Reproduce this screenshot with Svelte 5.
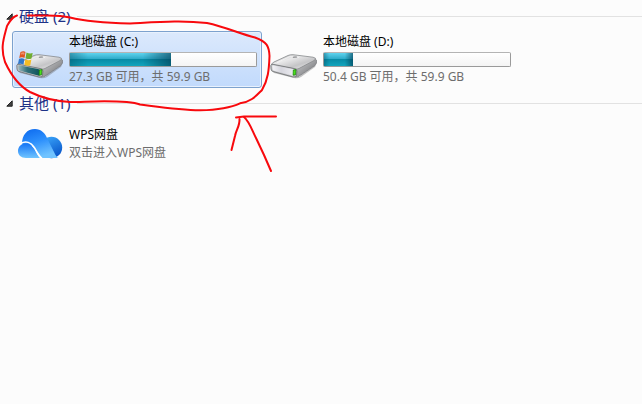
<script>
  let open = $state({ disks: true, other: true });
  let selected = $state('C');

  const drives = [
    { id: 'C', name: '本地磁盘 (C:)', free: 27.3, total: 59.9, system: true },
    { id: 'D', name: '本地磁盘 (D:)', free: 50.4, total: 59.9, system: false }
  ];
</script>

{#snippet heading(key, label)}
  <h2>
    <button class="toggle" aria-expanded={open[key]} onclick={() => (open[key] = !open[key])}>
      <svg width="7" height="7" viewBox="0 0 7 7" aria-hidden="true">
        <path d="M6.2.8V6.2H.8Z" fill="#444" stroke="#222" />
      </svg>
      <span>{label}</span>
    </button>
  </h2>
{/snippet}

{#snippet driveIcon(system)}
  <svg class="icon" width="48" height="47" viewBox="0 0 48 47" aria-hidden="true">
    <defs>
      <linearGradient id="top{system}" x1="0" y1="0" x2="1" y2="1">
        <stop offset="0" stop-color="#a9a9ab" />
        <stop offset=".35" stop-color="#e9e9ea" />
        <stop offset=".65" stop-color="#c5c5c7" />
        <stop offset="1" stop-color="#f1f1f2" />
      </linearGradient>
      <linearGradient id="side{system}" x1="0" y1="0" x2="1" y2="1">
        <stop offset="0" stop-color="#d8d8da" />
        <stop offset="1" stop-color="#65676a" />
      </linearGradient>
      <linearGradient id="front{system}" x1="0" y1="0" x2="1" y2="0">
        <stop offset="0" stop-color={system ? '#9eb9bd' : '#f4f4f7'} />
        <stop offset=".4" stop-color={system ? '#31707a' : '#d6d6de'} />
        <stop offset="1" stop-color={system ? '#0b5358' : '#eeeef2'} />
      </linearGradient>
    </defs>
    <path d="M2 35 26 41Q29 42 31 39L46 29 45 31 31 41Q28 43 24 42L4 37Z" fill="#555" opacity=".35" />
    <path d="M25 32 45 23Q47 23 46.500 27L45 29.500 30 39.500Q28 41.500 25 41Z" fill="url(#side{system})" stroke="#77797c" stroke-width=".7" />
    <path d="M1.500 28.500Q2 27 4 26L18 19.500Q20 18.500 23 18.700L43 21.200Q47 22 45 24L29 32.500Q27 33.500 25 33L3 29.500Z" fill="url(#top{system})" stroke="#87898b" stroke-width=".8" />
    <path d="M.8 29.500Q1 28 3 28.300L24 32.500Q27 33 27 35L26.500 39.500Q26 41.500 23 41L3 35.500Q1 35 1 33Z" fill="#c2c3c6" stroke="#6b6d70" stroke-width=".8" />
    <path d="M2.200 30Q2.500 29 4 29.500L22 33Q24.500 33.500 24.500 35L24 38.500Q24 40 22 39.500L4 34.800Q2.500 34.300 2.500 33Z" fill="url(#front{system})" />
    <path d="M23.300 34 26 33.600 25.600 38.800 23.100 39.200Z" fill="#4be21b" stroke="#147a08" stroke-width=".7" />
    <ellipse cx="25" cy="21.200" rx="2.400" ry=".9" fill="#808285" />
    <path d="M7 26.500 20 20.500 29 21.500" fill="none" stroke="#fff" stroke-width=".8" opacity=".65" />
    {#if system}
      <path d="M4.500 16Q7.500 14.500 9.500 16L8.500 22Q6 20.500 3.200 22Z" fill="#e0561f" />
      <path d="M10.500 16.500Q13.500 18 16.700 17L15.500 22.500Q12.500 23.700 9.500 22.300Z" fill="#70ad2f" />
      <path d="M3 22.800Q6 21.500 8.400 23L7.500 28.700Q5 27 2 28Z" fill="#3178c9" />
      <path d="M9.300 23.300Q12.500 25 15.400 23.500L14.300 29.200Q11.500 30.500 8.400 29Z" fill="#f4bd25" />
      <path d="M5.200 16.700Q7.200 15.800 8.700 16.700L8.200 18.800Q6.200 17.900 4.700 18.800Z" fill="#fff" opacity=".35" />
    {/if}
  </svg>
{/snippet}

<main>
  <section>
    {@render heading('disks', '硬盘 (2)')}
    {#if open.disks}
      <div class="tiles">
        {#each drives as drive (drive.id)}
          <button class="tile" class:selected={selected === drive.id} onclick={() => (selected = drive.id)}>
            {@render driveIcon(drive.system)}
            <span class="info">
              <span class="name">{drive.name}</span>
              <span class="bar">
                <span class="used" style:width="{(1 - drive.free / drive.total) * 100}%"></span>
              </span>
              <span class="detail">{drive.free} GB 可用，共 {drive.total} GB</span>
            </span>
          </button>
        {/each}
      </div>
    {/if}
  </section>

  <section>
    {@render heading('other', '其他 (1)')}
    {#if open.other}
      <div class="tiles">
        <button class="tile compact" class:selected={selected === 'WPS'} onclick={() => (selected = 'WPS')}>
          <svg class="icon" width="48" height="47" viewBox="0 0 48 47" aria-hidden="true">
            <defs>
              <linearGradient id="cloud" x1="0" y1="0" x2=".4" y2="1">
                <stop offset="0" stop-color="#0b68ee" />
                <stop offset=".5" stop-color="#2c8ffc" />
                <stop offset="1" stop-color="#70c3ff" />
              </linearGradient>
              <linearGradient id="lobe" x1=".2" y1="0" x2=".7" y2="1">
                <stop offset="0" stop-color="#3aa5fa" />
                <stop offset="1" stop-color="#0753c8" />
              </linearGradient>
              <linearGradient id="small" x1="0" y1="0" x2="0" y2="1">
                <stop offset="0" stop-color="#1675f5" />
                <stop offset="1" stop-color="#70c5ff" />
              </linearGradient>
            </defs>
            <circle cx="35.500" cy="27.500" r="10.700" fill="url(#lobe)" />
            <path d="M6 24C6 15 11 9 19 9C25 9 29 13 31 18L38 32C40 36 41 38 43 38H26L17 26Z" fill="url(#cloud)" />
            <path d="M10 23.500C15 23.500 17 27 19 30C21 34 22 36 24 38H10C5 38 2 35 2 31C2 27 5 23.500 10 23.500Z" fill="url(#small)" />
            <path d="M4.500 23.500C10 20.500 15 22.500 18 27C21 31 22 36 26 38.500" fill="none" stroke="#fff" stroke-width="1.500" />
          </svg>
          <span class="info">
            <span class="name">WPS网盘</span>
            <span class="detail">双击进入WPS网盘</span>
          </span>
        </button>
      </div>
    {/if}
  </section>

  <svg class="ink" width="290" height="180" viewBox="0 0 290 180" aria-hidden="true">
    <path d="M28 15.500C42 16 57 14 70 17.500C88 22 108 23 130 23.500C158 22 182 20 207 23C226 27 240 34 255 37.500C267 42 269 46 269.500 56C269 70 268 80 262 90C256 96 251 102 240 103.300C228 109 211 110 200 110.300C180 110 160 107 140 104.500C125 99 87 102 70 102C51 101 40 97 30 92C19 86 11 75 5 62C0 47 4 38 7 26C10 21 12 17 17 15.500" />
    <path d="M236 117.500 244 116.500H276" />
    <path d="M239.500 119C240 126 236 130 235 136L231.500 150" />
    <path d="M244 117C249 121 252 130 256 138L264 155 271 171" />
  </svg>
</main>

<style>
  :global(body) {
    margin: 0;
    background: #fcfcfc;
  }

  main {
    position: relative;
    min-height: 100vh;
    box-sizing: border-box;
    padding-top: 4px;
    font-family: 'Noto Sans', 'Noto Sans CJK SC', sans-serif;
    font-size: 12px;
    color: #000;
  }

  button {
    font: inherit;
    color: inherit;
    background: none;
    border: 0;
    padding: 0;
    text-align: left;
  }

  h2 {
    display: flex;
    align-items: center;
    gap: 7px;
    height: 24px;
    margin: 0;
    padding-left: 6px;
    font-size: 15px;
    font-weight: 400;
    line-height: 24px;
    color: #1e3287;
  }

  h2::after {
    content: '';
    flex: 1;
    height: 1px;
    background: #e2e2e2;
  }

  .toggle {
    display: flex;
    align-items: center;
    gap: 6px;
    white-space: nowrap;
  }

  .tiles {
    display: flex;
    flex-wrap: wrap;
    gap: 4px;
    padding: 3px 12px;
  }

  .tile {
    display: flex;
    align-items: center;
    gap: 5px;
    box-sizing: border-box;
    width: 250px;
    height: 57px;
    padding: 0 4px 0 3px;
    border: 1px solid transparent;
    border-radius: 3px;
  }

  .compact {
    height: 51px;
  }

  .selected {
    border-color: #7da2ce;
    background: linear-gradient(#dce9fc, #c1dafc);
    box-shadow: inset 0 0 0 1px #e8f1fd;
  }

  .icon {
    flex: none;
  }

  .info {
    display: flex;
    flex: 1;
    flex-direction: column;
    line-height: 18px;
    white-space: nowrap;
  }

  .bar {
    display: block;
    box-sizing: border-box;
    height: 15px;
    margin: 1px 0;
    border: 1px solid #9a9a9a;
    border-top-color: #b4b4b4;
    border-radius: 2px;
    background: linear-gradient(#fff, #f4f4f4);
  }

  .used {
    display: block;
    height: 100%;
    background:
      linear-gradient(90deg, #004b6066, transparent 18%, transparent 72%, #00334a99),
      linear-gradient(#5fd3ee, #2eabc9 45%, #088ba6 50%, #12a5bd);
  }

  .detail {
    color: #6d6d6d;
  }

  .ink {
    position: absolute;
    top: 0;
    left: 0;
    pointer-events: none;
    fill: none;
    stroke: #f8090d;
    stroke-width: 2;
    stroke-linecap: round;
    stroke-linejoin: round;
  }
</style>
